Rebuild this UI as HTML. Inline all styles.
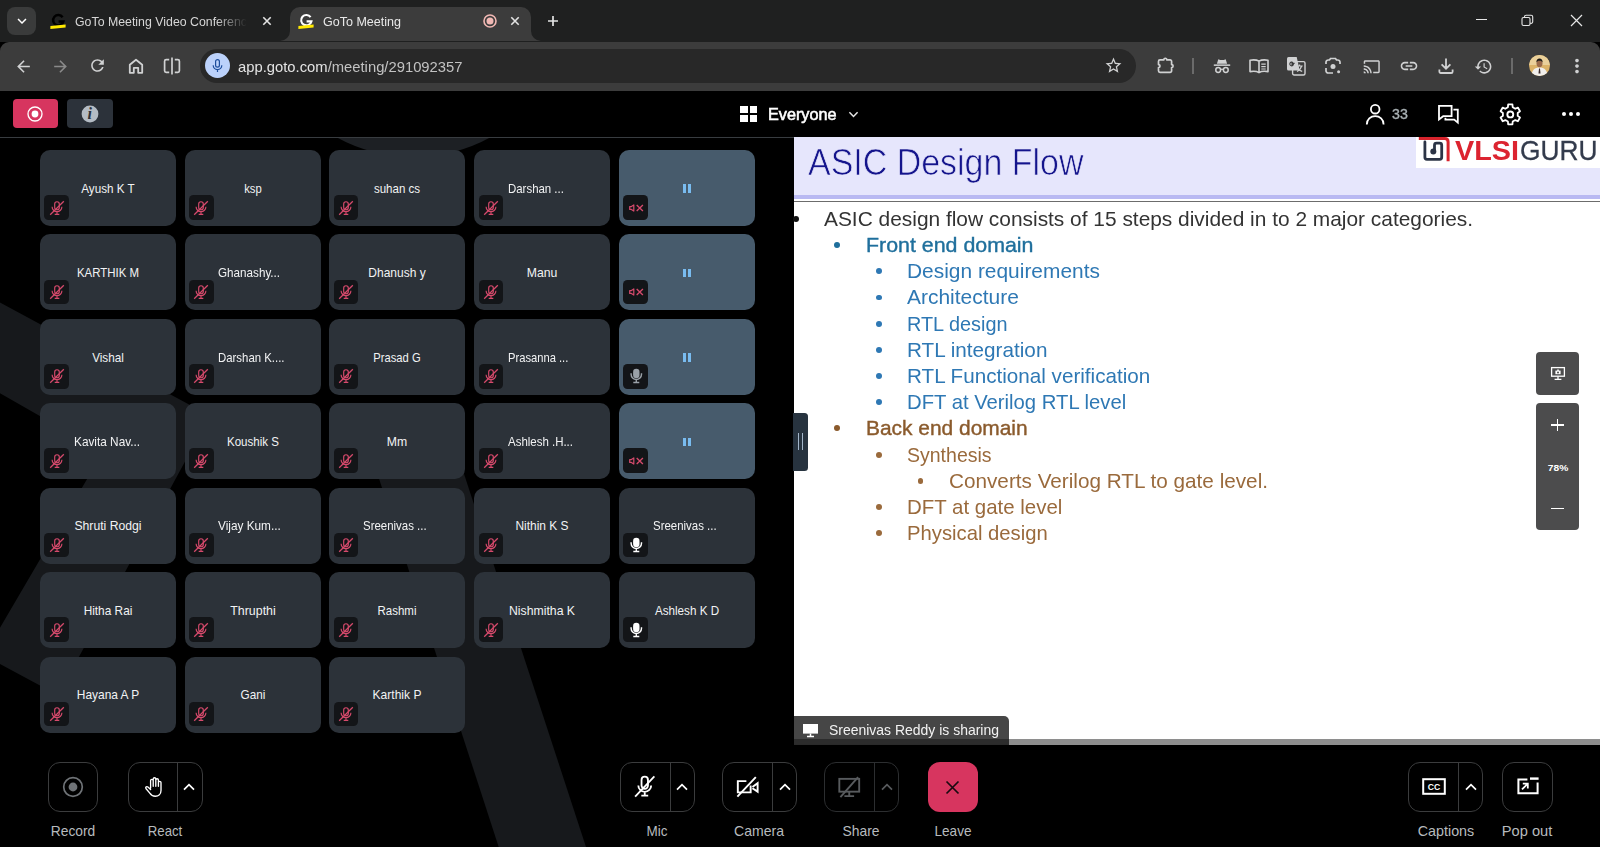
<!DOCTYPE html>
<html lang="en"><head><meta charset="utf-8"><title>GoTo Meeting</title>
<style>html,body{margin:0;padding:0;background:#000;}body{width:1600px;height:847px;position:relative;overflow:hidden;font-family:"Liberation Sans",sans-serif;}.b{position:absolute;display:block;}.t{position:absolute;white-space:nowrap;display:block;}</style></head>
<body>
<svg class="b" style="left:0;top:137px" width="794" height="710" viewBox="0 137 794 710"><path d="M336 137A160 160 0 0 0 491 137z" fill="#1d2024"/><path d="M0 302.400L209.900 415.700L58.100 695.200L0 664.100L0 627.800L102.900 452L0 393.300z" fill="#17191c"/><path d="M360 420L446.400 420L586 847L498.700 847z" fill="#17191c"/></svg>
<div class="b" style="left:0.00px;top:0.00px;width:1600.00px;height:42.00px;background:#1f2020;"></div>
<div class="b" style="left:0.00px;top:41.50px;width:1600.00px;height:49.50px;background:#3c3c3c;border-radius:9px 9px 0 0;"></div>
<div class="b" style="left:7.00px;top:7.00px;width:29.00px;height:28.00px;background:#3a3b3b;border-radius:8px;"></div>
<svg class="b" style="left:12.50px;top:12.00px;" width="18" height="18" viewBox="0 0 24 24"><path d="M16.59 8.59L12 13.17 7.41 8.59 6 10l6 6 6-6z" fill="#fff" /></svg>
<svg class="b" style="left:49px;top:12px" width="18" height="18" viewBox="0 0 18 18"><path d="M13.6 5.2A5.2 5.2 0 1 0 14.4 9.4H9.6" fill="none" stroke="#000000" stroke-width="2.5"/><path d="M1.400 14l15.200-1.400v3L1.400 17z" fill="#ffe900"/></svg>
<span id="t1" class="t" style="top:14.50px;font-size:13px;line-height:13px;color:#d6d6d6;left:75.00px;transform:scaleX(0.9495);transform-origin:0 0;padding-bottom:4px;-webkit-mask-image:linear-gradient(90deg,#000 82%,transparent 100%);mask-image:linear-gradient(90deg,#000 82%,transparent 100%);">GoTo Meeting Video Conferenc</span>
<svg class="b" style="left:260.5px;top:14.7px" width="12" height="12" viewBox="0 0 12 12"><path d="M2.300 2.300l7.400 7.400M9.700 2.300l-7.400 7.400" stroke="#e3e3e3" stroke-width="1.600" fill="none"/></svg>
<div class="b" style="left:290.00px;top:6.80px;width:241.00px;height:34.20px;background:#3c3c3c;border-radius:10px 10px 0 0;"></div>
<svg class="b" style="left:280px;top:31px" width="10" height="10" viewBox="0 0 10 10"><path d="M10 0v10H0A10 10 0 0 0 10 0z" fill="#3c3c3c"/></svg>
<svg class="b" style="left:531px;top:31px" width="10" height="10" viewBox="0 0 10 10"><path d="M0 0v10h10A10 10 0 0 1 0 0z" fill="#3c3c3c"/></svg>
<svg class="b" style="left:297px;top:12px" width="18" height="18" viewBox="0 0 18 18"><path d="M13.6 5.2A5.2 5.2 0 1 0 14.4 9.4H9.6" fill="none" stroke="#ffffff" stroke-width="2.1"/><path d="M1.400 14l15.200-1.400v3L1.400 17z" fill="#ffe900"/></svg>
<span id="t2" class="t" style="top:14.50px;font-size:13px;line-height:13px;color:#e8e8e8;left:323.00px;transform:scaleX(0.9637);transform-origin:0 0;">GoTo Meeting</span>
<svg class="b" style="left:481.50px;top:12.50px;" width="16" height="16" viewBox="0 0 16 16"><circle cx="8" cy="8" r="6" fill="none" stroke="#f1b8b4" stroke-width="1.6"/><circle cx="8" cy="8" r="3.500" fill="#f1b8b4"/></svg>
<svg class="b" style="left:508.79999999999995px;top:14.7px" width="12" height="12" viewBox="0 0 12 12"><path d="M2.300 2.300l7.400 7.400M9.700 2.300l-7.400 7.400" stroke="#e3e3e3" stroke-width="1.600" fill="none"/></svg>
<svg class="b" style="left:546.500px;top:14.700px" width="12" height="12" viewBox="0 0 12 12"><path d="M6 1v10M1 6h10" stroke="#e3e3e3" stroke-width="1.700" fill="none"/></svg>
<div class="b" style="left:1476.00px;top:18.70px;width:11.00px;height:1.20px;background:#e6e6e6;"></div>
<svg class="b" style="left:1521px;top:14px" width="13" height="13" viewBox="0 0 13 13"><rect x="1" y="3.5" width="8" height="8" rx="1.5" fill="none" stroke="#e6e6e6" stroke-width="1.1"/><path d="M3.5 3.5V2.8A1.6 1.6 0 0 1 5.1 1.2h5A1.6 1.6 0 0 1 11.7 2.8v5a1.6 1.6 0 0 1-1.6 1.6H9.2" fill="none" stroke="#e6e6e6" stroke-width="1.1"/></svg>
<svg class="b" style="left:1570px;top:14px" width="13" height="13" viewBox="0 0 13 13"><path d="M1 1l11 11M12 1L1 12" stroke="#e6e6e6" stroke-width="1.2" fill="none"/></svg>
<svg class="b" style="left:13.50px;top:56.50px;" width="19" height="19" viewBox="0 0 24 24"><path d="M20 11H7.83l5.59-5.59L12 4l-8 8 8 8 1.41-1.41L7.83 13H20v-2z" fill="#d0d1d2" /></svg>
<svg class="b" style="left:50.50px;top:56.50px;" width="19" height="19" viewBox="0 0 24 24"><path d="M12 4l-1.41 1.41L16.17 11H4v2h12.17l-5.58 5.59L12 20l8-8z" fill="#8a8a8a" /></svg>
<svg class="b" style="left:88.00px;top:56.00px;" width="19" height="19" viewBox="0 0 24 24"><path d="M17.65 6.35C16.2 4.9 14.21 4 12 4c-4.42 0-7.99 3.58-7.99 8s3.57 8 7.99 8c3.73 0 6.84-2.55 7.73-6h-2.08c-.82 2.33-3.04 4-5.65 4-3.31 0-6-2.69-6-6s2.69-6 6-6c1.66 0 3.14.69 4.22 1.78L13 11h7V4l-2.35 2.35z" fill="#d0d1d2" /></svg>
<svg class="b" style="left:125.5px;top:55.500px" width="20" height="20" viewBox="0 0 20 20"><path d="M3.800 8.700L10 3.700l6.200 5v8.100h-4v-5H7.800v5h-4z" fill="none" stroke="#d0d1d2" stroke-width="1.800" stroke-linejoin="round"/></svg>
<svg class="b" style="left:162px;top:56px" width="20" height="20" viewBox="0 0 20 20"><path d="M7.2 3.6H4.2a1.6 1.6 0 0 0-1.6 1.6v9.6a1.6 1.6 0 0 0 1.6 1.6h3M12.8 3.6h3a1.6 1.6 0 0 1 1.6 1.6v9.6a1.6 1.6 0 0 1-1.6 1.6h-3M10 1.6v16.8" fill="none" stroke="#d0d1d2" stroke-width="1.7"/></svg>
<div class="b" style="left:200.00px;top:48.50px;width:936.00px;height:34.50px;background:#282828;border-radius:17.25px;"></div>
<div class="b" style="left:205.20px;top:53.20px;width:25.00px;height:25.00px;background:#bcd2fb;border-radius:12.5px;"></div>
<svg class="b" style="left:210.200px;top:58.200px" width="15" height="15" viewBox="0 0 15 15"><rect x="5.600" y="1.700" width="3.800" height="7.400" rx="1.900" fill="none" stroke="#1b4c9c" stroke-width="1.200"/><path d="M3.200 7.300a4.300 4.300 0 0 0 8.600 0M7.500 11.600v2.300" fill="none" stroke="#1b4c9c" stroke-width="1.200"/></svg>
<span id="t3" class="t" style="top:60.08px;font-size:14.2px;line-height:14.2px;color:#e3e3e3;left:238.30px;transform:scaleX(1.0424);transform-origin:0 0;">app.goto.com<span style="color:#c2c2c2">/meeting/291092357</span></span>
<svg class="b" style="left:1103.50px;top:56.00px;" width="19" height="19" viewBox="0 0 24 24"><path d="M22 9.24l-7.19-.62L12 2 9.19 8.63 2 9.24l5.46 4.73L5.82 21 12 17.27 18.18 21l-1.63-7.03L22 9.24zM12 15.4l-3.76 2.27 1-4.28-3.32-2.88 4.38-.38L12 6.1l1.71 4.04 4.38.38-3.32 2.88 1 4.28L12 15.4z" fill="#d0d1d2" /></svg>
<svg class="b" style="left:1154.500px;top:56px" width="20" height="20" viewBox="0 0 20 20"><path d="M3.500 5.400a1.500 1.500 0 0 1 1.500-1.500H8.700a1.600 1.600 0 0 1 3.200 0H15.100a1.500 1.500 0 0 1 1.500 1.500V8.600a1.500 1.500 0 0 1 0 3V14.800a1.500 1.500 0 0 1-1.500 1.500H5a1.500 1.500 0 0 1-1.500-1.500V11.600a1.500 1.500 0 0 0 0-3z" fill="none" stroke="#d0d1d2" stroke-width="1.700" stroke-linejoin="round"/></svg>
<div class="b" style="left:1192.00px;top:58.00px;width:1.50px;height:16.00px;background:#6b6b6b;"></div>
<svg class="b" style="left:1211.5px;top:56px" width="20" height="20" viewBox="0 0 20 20"><path d="M6.3 3.2l-1.4 4.6h10.2l-1.4-4.6-1.9.7h-3.6z" fill="#d0d1d2"/><rect x="1.8" y="8.4" width="16.4" height="1.5" fill="#d0d1d2"/><circle cx="6.2" cy="14" r="2.4" fill="none" stroke="#d0d1d2" stroke-width="1.5"/><circle cx="13.8" cy="14" r="2.4" fill="none" stroke="#d0d1d2" stroke-width="1.5"/><path d="M8.6 13.6q1.4-.9 2.8 0" fill="none" stroke="#d0d1d2" stroke-width="1.3"/></svg>
<svg class="b" style="left:1247.7px;top:56px" width="22" height="20" viewBox="0 0 22 20"><path d="M11 5.2C8.8 3.8 5.4 3.6 2 4.2v11.4c3.4-.6 6.8-.4 9 1 2.2-1.400 5.6-1.600 9-1V4.200c-3.400-.600-6.800-.400-9 1zM11 5.200v11.400" fill="none" stroke="#d0d1d2" stroke-width="1.600" stroke-linejoin="round"/><path d="M13.300 8.200h4.400M13.300 10.600h4.400M13.300 13h4.400" stroke="#d0d1d2" stroke-width="1.200" fill="none"/></svg>
<svg class="b" style="left:1285px;top:55px" width="22" height="22" viewBox="0 0 22 22"><rect x="7.6" y="6.6" width="12.4" height="13.400" rx="1.500" fill="#3c3c3c" stroke="#d0d1d2" stroke-width="1.400"/><path d="M11.500 11h6.200M14.600 9.600v1.400M16.600 11c-.600 2.400-2.400 4.400-4.600 5.400M12.800 13c.800 1.500 2.400 2.800 4.400 3.400" stroke="#d0d1d2" stroke-width="1.100" fill="none"/><path d="M2 3.500a1.500 1.500 0 0 1 1.500-1.500h8.200l3 13.400H3.500A1.500 1.500 0 0 1 2 13.900z" fill="#d0d1d2"/><path d="M9.600 8.400H7v1.200h1.300c-.2.800-.8 1.300-1.600 1.300a1.900 1.900 0 1 1 1.300-3.300" fill="none" stroke="#3c3c3c" stroke-width="1.100"/></svg>
<svg class="b" style="left:1323px;top:56px" width="20" height="20" viewBox="0 0 20 20"><path d="M3 8V6.200A2.200 2.200 0 0 1 5.200 4h1.300l1-1.500h5l1 1.500h1.300A2.200 2.200 0 0 1 17 6.200V8M3 12v2.800A2.200 2.200 0 0 0 5.200 17H10" fill="none" stroke="#d0d1d2" stroke-width="1.700"/><circle cx="10" cy="10.400" r="2.500" fill="#d0d1d2"/><circle cx="15.600" cy="15.800" r="1.500" fill="#d0d1d2"/></svg>
<svg class="b" style="left:1362.75px;top:57.75px;" width="17.5" height="17.5" viewBox="0 0 24 24"><path d="M21 3H3c-1.1 0-2 .9-2 2v3h2V5h18v14h-7v2h7c1.1 0 2-.9 2-2V5c0-1.1-.9-2-2-2zM1 18v3h3c0-1.66-1.34-3-3-3zm0-4v2c2.76 0 5 2.24 5 5h2c0-3.87-3.13-7-7-7zm0-4v2c4.97 0 9 4.03 9 9h2c0-6.08-4.93-11-11-11z" fill="#d0d1d2" /></svg>
<svg class="b" style="left:1398.80px;top:56.00px;" width="20" height="20" viewBox="0 0 24 24"><path d="M3.9 12c0-1.71 1.39-3.1 3.1-3.1h4V7H7c-2.76 0-5 2.24-5 5s2.24 5 5 5h4v-1.9H7c-1.71 0-3.1-1.39-3.1-3.1zM8 13h8v-2H8v2zm9-6h-4v1.9h4c1.71 0 3.1 1.39 3.1 3.1s-1.39 3.1-3.1 3.1h-4V17h4c2.76 0 5-2.24 5-5s-2.24-5-5-5z" fill="#d0d1d2" /></svg>
<svg class="b" style="left:1435.6px;top:56px" width="20" height="20" viewBox="0 0 20 20"><path d="M10 2.5v10M5.6 8.4l4.4 4.3 4.4-4.3M3.4 13.5v2.2a1.3 1.3 0 0 0 1.3 1.3h10.6a1.3 1.3 0 0 0 1.3-1.3v-2.2" fill="none" stroke="#d0d1d2" stroke-width="1.8"/></svg>
<svg class="b" style="left:1473.70px;top:56.50px;" width="19" height="19" viewBox="0 0 24 24"><path d="M13 3c-4.97 0-9 4.03-9 9H1l3.89 3.89.07.14L9 12H6c0-3.87 3.13-7 7-7s7 3.13 7 7-3.13 7-7 7c-1.93 0-3.68-.79-4.94-2.06l-1.42 1.42C8.27 19.99 10.51 21 13 21c4.97 0 9-4.03 9-9s-4.03-9-9-9zm-1 5v5l4.28 2.54.72-1.21-3.5-2.08V8H12z" fill="#d0d1d2" /></svg>
<div class="b" style="left:1511.00px;top:58.00px;width:1.50px;height:16.00px;background:#6b6b6b;"></div>
<svg class="b" style="left:1529.2px;top:55.3px" width="21" height="21" viewBox="0 0 21 21"><defs><clipPath id="avc"><circle cx="10.500" cy="10.500" r="10.500"/></clipPath></defs><g clip-path="url(#avc)"><rect width="21" height="21" fill="#dcb368"/><rect x="0" y="0" width="21" height="10" fill="#ead09a"/><path d="M2.500 21c0-6 3.500-8.500 8-8.500s8 2.500 8 8.500z" fill="#f1efec"/><ellipse cx="10.500" cy="8.600" rx="3" ry="3.700" fill="#9a6a4a"/><path d="M7.300 7.600c0-3 1.400-4.200 3.200-4.200s3.200 1.200 3.200 4.200c-.800-1.400-1.800-1.800-3.200-1.800s-2.400.4-3.200 1.800z" fill="#1d1a18"/><path d="M10 13.500h1l.5 5h-2z" fill="#3a2a2a"/></g></svg>
<svg class="b" style="left:1566.00px;top:54.60px;" width="22" height="22" viewBox="0 0 24 24"><path d="M12 8c1.1 0 2-.9 2-2s-.9-2-2-2-2 .9-2 2 .9 2 2 2zm0 2c-1.1 0-2 .9-2 2s.9 2 2 2 2-.9 2-2-.9-2-2-2zm0 6c-1.1 0-2 .9-2 2s.9 2 2 2 2-.9 2-2-.9-2-2-2z" fill="#d0d1d2" /></svg>
<div class="b" style="left:0.00px;top:91.00px;width:1600.00px;height:46.00px;background:#000;"></div>
<div class="b" style="left:0.00px;top:136.60px;width:794.00px;height:1.20px;background:#383c40;"></div>
<div class="b" style="left:12.50px;top:99.00px;width:45.50px;height:29.00px;background:#d7355f;border-radius:4px;"></div>
<svg class="b" style="left:26.20px;top:104.50px;" width="18" height="18" viewBox="0 0 18 18"><circle cx="9" cy="9" r="7" fill="none" stroke="#fff" stroke-width="1.350"/><circle cx="9" cy="9" r="3.400" fill="#fff"/></svg>
<div class="b" style="left:67.00px;top:99.00px;width:45.50px;height:29.00px;background:#2c323a;border-radius:4px;"></div>
<svg class="b" style="left:80.50px;top:104.50px;" width="18" height="18" viewBox="0 0 18 18"><circle cx="9" cy="9" r="8.400" fill="#b4bcc4"/></svg>
<span id="t4" class="t" style="top:106.06px;font-size:16px;line-height:16px;color:#2c323a;font-weight:700;left:89.70px;transform:translateX(-50%);font-family:'Liberation Serif',serif;font-style:italic;">i</span>
<div class="b" style="left:740.00px;top:106.00px;width:7.80px;height:7.00px;background:#fff;"></div>
<div class="b" style="left:749.60px;top:106.00px;width:7.80px;height:7.00px;background:#fff;"></div>
<div class="b" style="left:740.00px;top:115.00px;width:7.80px;height:7.00px;background:#fff;"></div>
<div class="b" style="left:749.60px;top:115.00px;width:7.80px;height:7.00px;background:#fff;"></div>
<span id="t5" class="t" style="top:107.11px;font-size:15.7px;line-height:15.7px;color:#fff;left:768.00px;transform:scaleX(1.0335);transform-origin:0 0;-webkit-text-stroke:0.55px #fff;">Everyone</span>
<svg class="b" style="left:847px;top:109px" width="13" height="11" viewBox="0 0 13 11"><path d="M2.400 3.200l4.100 4.200 4.100-4.200" fill="none" stroke="#e6e6e6" stroke-width="1.500"/></svg>
<svg class="b" style="left:1364px;top:102px" width="23" height="24" viewBox="0 0 23 24"><circle cx="11.200" cy="7.200" r="4.300" fill="none" stroke="#fff" stroke-width="1.800"/><path d="M2.800 22.400c0-5 3.800-8.200 8.400-8.200s8.400 3.200 8.400 8.200" fill="none" stroke="#fff" stroke-width="1.800"/></svg>
<span id="t6" class="t" style="top:107.17px;font-size:14.8px;line-height:14.8px;color:#a9b1b4;left:1392.30px;transform:scaleX(0.9594);transform-origin:0 0;-webkit-text-stroke:0.4px #a9b1b4;">33</span>
<svg class="b" style="left:1436px;top:103px" width="25" height="22" viewBox="0 0 25 22"><path d="M3 2.800h12.600v10.400H7.200L3 16.400z" fill="none" stroke="#fff" stroke-width="1.800" stroke-linejoin="miter"/><path d="M17.400 6.600h4.400v13l-3.600-3H9.400v-1.800" fill="none" stroke="#fff" stroke-width="1.800"/></svg>
<svg class="b" style="left:0;top:0;overflow:visible" width="1" height="1"><path d="M1507.89 107.25L1508.18 104.42L1512.42 104.42L1512.71 107.25L1515.29 108.74L1517.88 107.57L1520.00 111.25L1517.70 112.91L1517.70 115.89L1520.00 117.55L1517.88 121.23L1515.29 120.06L1512.71 121.55L1512.42 124.38L1508.18 124.38L1507.89 121.55L1505.31 120.06L1502.72 121.23L1500.60 117.55L1502.90 115.89L1502.90 112.91L1500.60 111.25L1502.72 107.57L1505.31 108.74Z" fill="none" stroke="#fff" stroke-width="1.800" stroke-linejoin="round"/><circle cx="1510.3" cy="114.4" r="2.96" fill="none" stroke="#fff" stroke-width="1.900"/></svg>
<div class="b" style="left:1561.50px;top:112.30px;width:4.20px;height:4.20px;background:#fff;border-radius:2.1px;"></div>
<div class="b" style="left:1568.90px;top:112.30px;width:4.20px;height:4.20px;background:#fff;border-radius:2.1px;"></div>
<div class="b" style="left:1576.30px;top:112.30px;width:4.20px;height:4.20px;background:#fff;border-radius:2.1px;"></div>
<div class="b" style="left:40.00px;top:150.00px;width:136.00px;height:76.00px;background:#2c3239;border-radius:10px;"></div>
<span id="t7" class="t" style="top:181.76px;font-size:13.4px;line-height:13.4px;color:#f2f3f4;left:108.00px;transform:translateX(-50%) scaleX(0.8712);">Ayush K T</span>
<div class="b" style="left:44.40px;top:195.20px;width:24.60px;height:24.60px;background:#131518;border-radius:4.5px;"></div><svg class="b" style="left:46.70px;top:197.50px" width="20" height="20" viewBox="0 0 20 20"><path d="M7.700 9.400V6a2.300 2.300 0 0 1 4.600 0v3.400a2.300 2.300 0 0 1-4.600 0z" fill="none" stroke="#d64a6c" stroke-width="1.150"/><path d="M5.100 8.800a4.900 4.900 0 0 0 9.800 0M10 13.900v2.300M7.700 16.300h4.600" fill="none" stroke="#d64a6c" stroke-width="1.150"/><path d="M3.200 16.800L16.800 3.200" stroke="#d64a6c" stroke-width="1.250"/></svg>
<div class="b" style="left:184.72px;top:150.00px;width:136.00px;height:76.00px;background:#2c3239;border-radius:10px;"></div>
<span id="t8" class="t" style="top:181.76px;font-size:13.4px;line-height:13.4px;color:#f2f3f4;left:252.72px;transform:translateX(-50%) scaleX(0.8396);">ksp</span>
<div class="b" style="left:189.12px;top:195.20px;width:24.60px;height:24.60px;background:#131518;border-radius:4.5px;"></div><svg class="b" style="left:191.42px;top:197.50px" width="20" height="20" viewBox="0 0 20 20"><path d="M7.700 9.400V6a2.300 2.300 0 0 1 4.600 0v3.400a2.300 2.300 0 0 1-4.600 0z" fill="none" stroke="#d64a6c" stroke-width="1.150"/><path d="M5.100 8.800a4.900 4.900 0 0 0 9.800 0M10 13.900v2.300M7.700 16.300h4.600" fill="none" stroke="#d64a6c" stroke-width="1.150"/><path d="M3.200 16.800L16.800 3.200" stroke="#d64a6c" stroke-width="1.250"/></svg>
<div class="b" style="left:329.44px;top:150.00px;width:136.00px;height:76.00px;background:#2c3239;border-radius:10px;"></div>
<span id="t9" class="t" style="top:181.76px;font-size:13.4px;line-height:13.4px;color:#f2f3f4;left:397.44px;transform:translateX(-50%) scaleX(0.8618);">suhan cs</span>
<div class="b" style="left:333.84px;top:195.20px;width:24.60px;height:24.60px;background:#131518;border-radius:4.5px;"></div><svg class="b" style="left:336.14px;top:197.50px" width="20" height="20" viewBox="0 0 20 20"><path d="M7.700 9.400V6a2.300 2.300 0 0 1 4.600 0v3.400a2.300 2.300 0 0 1-4.600 0z" fill="none" stroke="#d64a6c" stroke-width="1.150"/><path d="M5.100 8.800a4.900 4.900 0 0 0 9.800 0M10 13.900v2.300M7.700 16.300h4.600" fill="none" stroke="#d64a6c" stroke-width="1.150"/><path d="M3.200 16.800L16.800 3.200" stroke="#d64a6c" stroke-width="1.250"/></svg>
<div class="b" style="left:474.16px;top:150.00px;width:136.00px;height:76.00px;background:#2c3239;border-radius:10px;"></div>
<span id="t10" class="t" style="top:181.76px;font-size:13.4px;line-height:13.4px;color:#f2f3f4;left:507.86px;transform:scaleX(0.8534);transform-origin:0 0;">Darshan ...</span>
<div class="b" style="left:478.56px;top:195.20px;width:24.60px;height:24.60px;background:#131518;border-radius:4.5px;"></div><svg class="b" style="left:480.86px;top:197.50px" width="20" height="20" viewBox="0 0 20 20"><path d="M7.700 9.400V6a2.300 2.300 0 0 1 4.600 0v3.400a2.300 2.300 0 0 1-4.600 0z" fill="none" stroke="#d64a6c" stroke-width="1.150"/><path d="M5.100 8.800a4.900 4.900 0 0 0 9.800 0M10 13.900v2.300M7.700 16.300h4.600" fill="none" stroke="#d64a6c" stroke-width="1.150"/><path d="M3.200 16.800L16.800 3.200" stroke="#d64a6c" stroke-width="1.250"/></svg>
<div class="b" style="left:618.88px;top:150.00px;width:136.00px;height:76.00px;background:#475b6c;border-radius:10px;"></div>
<div class="b" style="left:682.98px;top:184.30px;width:3.30px;height:8.70px;background:#79bcf0;"></div>
<div class="b" style="left:687.98px;top:184.30px;width:3.30px;height:8.70px;background:#79bcf0;"></div>
<div class="b" style="left:623.28px;top:195.20px;width:24.60px;height:24.60px;background:#131518;border-radius:4.5px;"></div><svg class="b" style="left:625.58px;top:197.50px" width="20" height="20" viewBox="0 0 20 20"><path d="M3.700 8.600h1.700l2.400-1.700v6.200l-2.400-1.700H3.700z" fill="none" stroke="#d64a6c" stroke-width="1.200" stroke-linejoin="round"/><path d="M10.700 7l6.200 6M16.900 7l-6.200 6" stroke="#d64a6c" stroke-width="1.350"/></svg>
<div class="b" style="left:40.00px;top:234.42px;width:136.00px;height:76.00px;background:#2c3239;border-radius:10px;"></div>
<span id="t11" class="t" style="top:266.18px;font-size:13.4px;line-height:13.4px;color:#f2f3f4;left:108.00px;transform:translateX(-50%) scaleX(0.8545);">KARTHIK M</span>
<div class="b" style="left:44.40px;top:279.62px;width:24.60px;height:24.60px;background:#131518;border-radius:4.5px;"></div><svg class="b" style="left:46.70px;top:281.92px" width="20" height="20" viewBox="0 0 20 20"><path d="M7.700 9.400V6a2.300 2.300 0 0 1 4.600 0v3.400a2.300 2.300 0 0 1-4.600 0z" fill="none" stroke="#d64a6c" stroke-width="1.150"/><path d="M5.100 8.800a4.900 4.900 0 0 0 9.800 0M10 13.900v2.300M7.700 16.300h4.600" fill="none" stroke="#d64a6c" stroke-width="1.150"/><path d="M3.200 16.800L16.800 3.200" stroke="#d64a6c" stroke-width="1.250"/></svg>
<div class="b" style="left:184.72px;top:234.42px;width:136.00px;height:76.00px;background:#2c3239;border-radius:10px;"></div>
<span id="t12" class="t" style="top:266.18px;font-size:13.4px;line-height:13.4px;color:#f2f3f4;left:218.42px;transform:scaleX(0.8720);transform-origin:0 0;">Ghanashy...</span>
<div class="b" style="left:189.12px;top:279.62px;width:24.60px;height:24.60px;background:#131518;border-radius:4.5px;"></div><svg class="b" style="left:191.42px;top:281.92px" width="20" height="20" viewBox="0 0 20 20"><path d="M7.700 9.400V6a2.300 2.300 0 0 1 4.600 0v3.400a2.300 2.300 0 0 1-4.600 0z" fill="none" stroke="#d64a6c" stroke-width="1.150"/><path d="M5.100 8.800a4.900 4.900 0 0 0 9.800 0M10 13.900v2.300M7.700 16.300h4.600" fill="none" stroke="#d64a6c" stroke-width="1.150"/><path d="M3.200 16.800L16.800 3.200" stroke="#d64a6c" stroke-width="1.250"/></svg>
<div class="b" style="left:329.44px;top:234.42px;width:136.00px;height:76.00px;background:#2c3239;border-radius:10px;"></div>
<span id="t13" class="t" style="top:266.18px;font-size:13.4px;line-height:13.4px;color:#f2f3f4;left:397.44px;transform:translateX(-50%) scaleX(0.8964);">Dhanush y</span>
<div class="b" style="left:333.84px;top:279.62px;width:24.60px;height:24.60px;background:#131518;border-radius:4.5px;"></div><svg class="b" style="left:336.14px;top:281.92px" width="20" height="20" viewBox="0 0 20 20"><path d="M7.700 9.400V6a2.300 2.300 0 0 1 4.600 0v3.400a2.300 2.300 0 0 1-4.600 0z" fill="none" stroke="#d64a6c" stroke-width="1.150"/><path d="M5.100 8.800a4.900 4.900 0 0 0 9.800 0M10 13.900v2.300M7.700 16.300h4.600" fill="none" stroke="#d64a6c" stroke-width="1.150"/><path d="M3.200 16.800L16.800 3.200" stroke="#d64a6c" stroke-width="1.250"/></svg>
<div class="b" style="left:474.16px;top:234.42px;width:136.00px;height:76.00px;background:#2c3239;border-radius:10px;"></div>
<span id="t14" class="t" style="top:266.18px;font-size:13.4px;line-height:13.4px;color:#f2f3f4;left:542.16px;transform:translateX(-50%) scaleX(0.9134);">Manu</span>
<div class="b" style="left:478.56px;top:279.62px;width:24.60px;height:24.60px;background:#131518;border-radius:4.5px;"></div><svg class="b" style="left:480.86px;top:281.92px" width="20" height="20" viewBox="0 0 20 20"><path d="M7.700 9.400V6a2.300 2.300 0 0 1 4.600 0v3.400a2.300 2.300 0 0 1-4.600 0z" fill="none" stroke="#d64a6c" stroke-width="1.150"/><path d="M5.100 8.800a4.900 4.900 0 0 0 9.800 0M10 13.900v2.300M7.700 16.300h4.600" fill="none" stroke="#d64a6c" stroke-width="1.150"/><path d="M3.200 16.800L16.800 3.200" stroke="#d64a6c" stroke-width="1.250"/></svg>
<div class="b" style="left:618.88px;top:234.42px;width:136.00px;height:76.00px;background:#475b6c;border-radius:10px;"></div>
<div class="b" style="left:682.98px;top:268.72px;width:3.30px;height:8.70px;background:#79bcf0;"></div>
<div class="b" style="left:687.98px;top:268.72px;width:3.30px;height:8.70px;background:#79bcf0;"></div>
<div class="b" style="left:623.28px;top:279.62px;width:24.60px;height:24.60px;background:#131518;border-radius:4.5px;"></div><svg class="b" style="left:625.58px;top:281.92px" width="20" height="20" viewBox="0 0 20 20"><path d="M3.700 8.600h1.700l2.400-1.700v6.200l-2.400-1.700H3.700z" fill="none" stroke="#d64a6c" stroke-width="1.200" stroke-linejoin="round"/><path d="M10.700 7l6.200 6M16.900 7l-6.200 6" stroke="#d64a6c" stroke-width="1.350"/></svg>
<div class="b" style="left:40.00px;top:318.84px;width:136.00px;height:76.00px;background:#2c3239;border-radius:10px;"></div>
<span id="t15" class="t" style="top:350.60px;font-size:13.4px;line-height:13.4px;color:#f2f3f4;left:108.00px;transform:translateX(-50%) scaleX(0.8749);">Vishal</span>
<div class="b" style="left:44.40px;top:364.04px;width:24.60px;height:24.60px;background:#131518;border-radius:4.5px;"></div><svg class="b" style="left:46.70px;top:366.34px" width="20" height="20" viewBox="0 0 20 20"><path d="M7.700 9.400V6a2.300 2.300 0 0 1 4.600 0v3.400a2.300 2.300 0 0 1-4.600 0z" fill="none" stroke="#d64a6c" stroke-width="1.150"/><path d="M5.100 8.800a4.900 4.900 0 0 0 9.800 0M10 13.900v2.300M7.700 16.300h4.600" fill="none" stroke="#d64a6c" stroke-width="1.150"/><path d="M3.200 16.800L16.800 3.200" stroke="#d64a6c" stroke-width="1.250"/></svg>
<div class="b" style="left:184.72px;top:318.84px;width:136.00px;height:76.00px;background:#2c3239;border-radius:10px;"></div>
<span id="t16" class="t" style="top:350.60px;font-size:13.4px;line-height:13.4px;color:#f2f3f4;left:218.42px;transform:scaleX(0.8509);transform-origin:0 0;">Darshan K....</span>
<div class="b" style="left:189.12px;top:364.04px;width:24.60px;height:24.60px;background:#131518;border-radius:4.5px;"></div><svg class="b" style="left:191.42px;top:366.34px" width="20" height="20" viewBox="0 0 20 20"><path d="M7.700 9.400V6a2.300 2.300 0 0 1 4.600 0v3.400a2.300 2.300 0 0 1-4.600 0z" fill="none" stroke="#d64a6c" stroke-width="1.150"/><path d="M5.100 8.800a4.900 4.900 0 0 0 9.800 0M10 13.900v2.300M7.700 16.300h4.600" fill="none" stroke="#d64a6c" stroke-width="1.150"/><path d="M3.200 16.800L16.800 3.200" stroke="#d64a6c" stroke-width="1.250"/></svg>
<div class="b" style="left:329.44px;top:318.84px;width:136.00px;height:76.00px;background:#2c3239;border-radius:10px;"></div>
<span id="t17" class="t" style="top:350.60px;font-size:13.4px;line-height:13.4px;color:#f2f3f4;left:397.44px;transform:translateX(-50%) scaleX(0.8360);">Prasad G</span>
<div class="b" style="left:333.84px;top:364.04px;width:24.60px;height:24.60px;background:#131518;border-radius:4.5px;"></div><svg class="b" style="left:336.14px;top:366.34px" width="20" height="20" viewBox="0 0 20 20"><path d="M7.700 9.400V6a2.300 2.300 0 0 1 4.600 0v3.400a2.300 2.300 0 0 1-4.600 0z" fill="none" stroke="#d64a6c" stroke-width="1.150"/><path d="M5.100 8.800a4.900 4.900 0 0 0 9.800 0M10 13.900v2.300M7.700 16.300h4.600" fill="none" stroke="#d64a6c" stroke-width="1.150"/><path d="M3.200 16.800L16.800 3.200" stroke="#d64a6c" stroke-width="1.250"/></svg>
<div class="b" style="left:474.16px;top:318.84px;width:136.00px;height:76.00px;background:#2c3239;border-radius:10px;"></div>
<span id="t18" class="t" style="top:350.60px;font-size:13.4px;line-height:13.4px;color:#f2f3f4;left:507.86px;transform:scaleX(0.8350);transform-origin:0 0;">Prasanna ...</span>
<div class="b" style="left:478.56px;top:364.04px;width:24.60px;height:24.60px;background:#131518;border-radius:4.5px;"></div><svg class="b" style="left:480.86px;top:366.34px" width="20" height="20" viewBox="0 0 20 20"><path d="M7.700 9.400V6a2.300 2.300 0 0 1 4.600 0v3.400a2.300 2.300 0 0 1-4.600 0z" fill="none" stroke="#d64a6c" stroke-width="1.150"/><path d="M5.100 8.800a4.900 4.900 0 0 0 9.800 0M10 13.900v2.300M7.700 16.300h4.600" fill="none" stroke="#d64a6c" stroke-width="1.150"/><path d="M3.200 16.800L16.800 3.200" stroke="#d64a6c" stroke-width="1.250"/></svg>
<div class="b" style="left:618.88px;top:318.84px;width:136.00px;height:76.00px;background:#475b6c;border-radius:10px;"></div>
<div class="b" style="left:682.98px;top:353.14px;width:3.30px;height:8.70px;background:#79bcf0;"></div>
<div class="b" style="left:687.98px;top:353.14px;width:3.30px;height:8.70px;background:#79bcf0;"></div>
<div class="b" style="left:623.28px;top:364.04px;width:24.60px;height:24.60px;background:#131518;border-radius:4.5px;"></div><svg class="b" style="left:625.58px;top:366.34px" width="20" height="20" viewBox="0 0 20 20"><rect x="7.100" y="2.700" width="6.400" height="9.500" rx="3.200" fill="#9aa1a8"/><path d="M5.100 7.200V8.300a5.200 5.200 0 0 0 10.400 0V7.200M10.300 13.500V16.200M7.300 16.400h6" fill="none" stroke="#9aa1a8" stroke-width="1.450"/></svg>
<div class="b" style="left:40.00px;top:403.26px;width:136.00px;height:76.00px;background:#2c3239;border-radius:10px;"></div>
<span id="t19" class="t" style="top:435.02px;font-size:13.4px;line-height:13.4px;color:#f2f3f4;left:73.70px;transform:scaleX(0.8823);transform-origin:0 0;">Kavita Nav...</span>
<div class="b" style="left:44.40px;top:448.46px;width:24.60px;height:24.60px;background:#131518;border-radius:4.5px;"></div><svg class="b" style="left:46.70px;top:450.76px" width="20" height="20" viewBox="0 0 20 20"><path d="M7.700 9.400V6a2.300 2.300 0 0 1 4.600 0v3.400a2.300 2.300 0 0 1-4.600 0z" fill="none" stroke="#d64a6c" stroke-width="1.150"/><path d="M5.100 8.800a4.900 4.900 0 0 0 9.800 0M10 13.900v2.300M7.700 16.300h4.600" fill="none" stroke="#d64a6c" stroke-width="1.150"/><path d="M3.200 16.800L16.800 3.200" stroke="#d64a6c" stroke-width="1.250"/></svg>
<div class="b" style="left:184.72px;top:403.26px;width:136.00px;height:76.00px;background:#2c3239;border-radius:10px;"></div>
<span id="t20" class="t" style="top:435.02px;font-size:13.4px;line-height:13.4px;color:#f2f3f4;left:252.72px;transform:translateX(-50%) scaleX(0.8624);">Koushik S</span>
<div class="b" style="left:189.12px;top:448.46px;width:24.60px;height:24.60px;background:#131518;border-radius:4.5px;"></div><svg class="b" style="left:191.42px;top:450.76px" width="20" height="20" viewBox="0 0 20 20"><path d="M7.700 9.400V6a2.300 2.300 0 0 1 4.600 0v3.400a2.300 2.300 0 0 1-4.600 0z" fill="none" stroke="#d64a6c" stroke-width="1.150"/><path d="M5.100 8.800a4.900 4.900 0 0 0 9.800 0M10 13.900v2.300M7.700 16.300h4.600" fill="none" stroke="#d64a6c" stroke-width="1.150"/><path d="M3.200 16.800L16.800 3.200" stroke="#d64a6c" stroke-width="1.250"/></svg>
<div class="b" style="left:329.44px;top:403.26px;width:136.00px;height:76.00px;background:#2c3239;border-radius:10px;"></div>
<span id="t21" class="t" style="top:435.02px;font-size:13.4px;line-height:13.4px;color:#f2f3f4;left:397.44px;transform:translateX(-50%) scaleX(0.9143);">Mm</span>
<div class="b" style="left:333.84px;top:448.46px;width:24.60px;height:24.60px;background:#131518;border-radius:4.5px;"></div><svg class="b" style="left:336.14px;top:450.76px" width="20" height="20" viewBox="0 0 20 20"><path d="M7.700 9.400V6a2.300 2.300 0 0 1 4.600 0v3.400a2.300 2.300 0 0 1-4.600 0z" fill="none" stroke="#d64a6c" stroke-width="1.150"/><path d="M5.100 8.800a4.900 4.900 0 0 0 9.800 0M10 13.900v2.300M7.700 16.300h4.600" fill="none" stroke="#d64a6c" stroke-width="1.150"/><path d="M3.200 16.800L16.800 3.200" stroke="#d64a6c" stroke-width="1.250"/></svg>
<div class="b" style="left:474.16px;top:403.26px;width:136.00px;height:76.00px;background:#2c3239;border-radius:10px;"></div>
<span id="t22" class="t" style="top:435.02px;font-size:13.4px;line-height:13.4px;color:#f2f3f4;left:507.86px;transform:scaleX(0.8561);transform-origin:0 0;">Ashlesh .H...</span>
<div class="b" style="left:478.56px;top:448.46px;width:24.60px;height:24.60px;background:#131518;border-radius:4.5px;"></div><svg class="b" style="left:480.86px;top:450.76px" width="20" height="20" viewBox="0 0 20 20"><path d="M7.700 9.400V6a2.300 2.300 0 0 1 4.600 0v3.400a2.300 2.300 0 0 1-4.600 0z" fill="none" stroke="#d64a6c" stroke-width="1.150"/><path d="M5.100 8.800a4.900 4.900 0 0 0 9.800 0M10 13.900v2.300M7.700 16.300h4.600" fill="none" stroke="#d64a6c" stroke-width="1.150"/><path d="M3.200 16.800L16.800 3.200" stroke="#d64a6c" stroke-width="1.250"/></svg>
<div class="b" style="left:618.88px;top:403.26px;width:136.00px;height:76.00px;background:#475b6c;border-radius:10px;"></div>
<div class="b" style="left:682.98px;top:437.56px;width:3.30px;height:8.70px;background:#79bcf0;"></div>
<div class="b" style="left:687.98px;top:437.56px;width:3.30px;height:8.70px;background:#79bcf0;"></div>
<div class="b" style="left:623.28px;top:448.46px;width:24.60px;height:24.60px;background:#131518;border-radius:4.5px;"></div><svg class="b" style="left:625.58px;top:450.76px" width="20" height="20" viewBox="0 0 20 20"><path d="M3.700 8.600h1.700l2.400-1.700v6.200l-2.400-1.700H3.700z" fill="none" stroke="#d64a6c" stroke-width="1.200" stroke-linejoin="round"/><path d="M10.700 7l6.200 6M16.900 7l-6.200 6" stroke="#d64a6c" stroke-width="1.350"/></svg>
<div class="b" style="left:40.00px;top:487.68px;width:136.00px;height:76.00px;background:#2c3239;border-radius:10px;"></div>
<span id="t23" class="t" style="top:519.44px;font-size:13.4px;line-height:13.4px;color:#f2f3f4;left:108.00px;transform:translateX(-50%) scaleX(0.9118);">Shruti Rodgi</span>
<div class="b" style="left:44.40px;top:532.88px;width:24.60px;height:24.60px;background:#131518;border-radius:4.5px;"></div><svg class="b" style="left:46.70px;top:535.18px" width="20" height="20" viewBox="0 0 20 20"><path d="M7.700 9.400V6a2.300 2.300 0 0 1 4.600 0v3.400a2.300 2.300 0 0 1-4.600 0z" fill="none" stroke="#d64a6c" stroke-width="1.150"/><path d="M5.100 8.800a4.900 4.900 0 0 0 9.800 0M10 13.900v2.300M7.700 16.300h4.600" fill="none" stroke="#d64a6c" stroke-width="1.150"/><path d="M3.200 16.800L16.800 3.200" stroke="#d64a6c" stroke-width="1.250"/></svg>
<div class="b" style="left:184.72px;top:487.68px;width:136.00px;height:76.00px;background:#2c3239;border-radius:10px;"></div>
<span id="t24" class="t" style="top:519.44px;font-size:13.4px;line-height:13.4px;color:#f2f3f4;left:218.42px;transform:scaleX(0.8820);transform-origin:0 0;">Vijay Kum...</span>
<div class="b" style="left:189.12px;top:532.88px;width:24.60px;height:24.60px;background:#131518;border-radius:4.5px;"></div><svg class="b" style="left:191.42px;top:535.18px" width="20" height="20" viewBox="0 0 20 20"><path d="M7.700 9.400V6a2.300 2.300 0 0 1 4.600 0v3.400a2.300 2.300 0 0 1-4.600 0z" fill="none" stroke="#d64a6c" stroke-width="1.150"/><path d="M5.100 8.800a4.900 4.900 0 0 0 9.800 0M10 13.900v2.300M7.700 16.300h4.600" fill="none" stroke="#d64a6c" stroke-width="1.150"/><path d="M3.200 16.800L16.800 3.200" stroke="#d64a6c" stroke-width="1.250"/></svg>
<div class="b" style="left:329.44px;top:487.68px;width:136.00px;height:76.00px;background:#2c3239;border-radius:10px;"></div>
<span id="t25" class="t" style="top:519.44px;font-size:13.4px;line-height:13.4px;color:#f2f3f4;left:363.14px;transform:scaleX(0.8544);transform-origin:0 0;">Sreenivas ...</span>
<div class="b" style="left:333.84px;top:532.88px;width:24.60px;height:24.60px;background:#131518;border-radius:4.5px;"></div><svg class="b" style="left:336.14px;top:535.18px" width="20" height="20" viewBox="0 0 20 20"><path d="M7.700 9.400V6a2.300 2.300 0 0 1 4.600 0v3.400a2.300 2.300 0 0 1-4.600 0z" fill="none" stroke="#d64a6c" stroke-width="1.150"/><path d="M5.100 8.800a4.900 4.900 0 0 0 9.800 0M10 13.900v2.300M7.700 16.300h4.600" fill="none" stroke="#d64a6c" stroke-width="1.150"/><path d="M3.200 16.800L16.800 3.200" stroke="#d64a6c" stroke-width="1.250"/></svg>
<div class="b" style="left:474.16px;top:487.68px;width:136.00px;height:76.00px;background:#2c3239;border-radius:10px;"></div>
<span id="t26" class="t" style="top:519.44px;font-size:13.4px;line-height:13.4px;color:#f2f3f4;left:542.16px;transform:translateX(-50%) scaleX(0.8917);">Nithin K S</span>
<div class="b" style="left:478.56px;top:532.88px;width:24.60px;height:24.60px;background:#131518;border-radius:4.5px;"></div><svg class="b" style="left:480.86px;top:535.18px" width="20" height="20" viewBox="0 0 20 20"><path d="M7.700 9.400V6a2.300 2.300 0 0 1 4.600 0v3.400a2.300 2.300 0 0 1-4.600 0z" fill="none" stroke="#d64a6c" stroke-width="1.150"/><path d="M5.100 8.800a4.900 4.900 0 0 0 9.800 0M10 13.900v2.300M7.700 16.300h4.600" fill="none" stroke="#d64a6c" stroke-width="1.150"/><path d="M3.200 16.800L16.800 3.200" stroke="#d64a6c" stroke-width="1.250"/></svg>
<div class="b" style="left:618.88px;top:487.68px;width:136.00px;height:76.00px;background:#2c3239;border-radius:10px;"></div>
<span id="t27" class="t" style="top:519.44px;font-size:13.4px;line-height:13.4px;color:#f2f3f4;left:652.58px;transform:scaleX(0.8544);transform-origin:0 0;">Sreenivas ...</span>
<div class="b" style="left:623.28px;top:532.88px;width:24.60px;height:24.60px;background:#131518;border-radius:4.5px;"></div><svg class="b" style="left:625.58px;top:535.18px" width="20" height="20" viewBox="0 0 20 20"><rect x="7.100" y="2.700" width="6.400" height="9.500" rx="3.200" fill="#ffffff"/><path d="M5.100 7.200V8.300a5.200 5.200 0 0 0 10.400 0V7.200M10.300 13.500V16.200M7.300 16.400h6" fill="none" stroke="#ffffff" stroke-width="1.450"/></svg>
<div class="b" style="left:40.00px;top:572.10px;width:136.00px;height:76.00px;background:#2c3239;border-radius:10px;"></div>
<span id="t28" class="t" style="top:603.86px;font-size:13.4px;line-height:13.4px;color:#f2f3f4;left:108.00px;transform:translateX(-50%) scaleX(0.8842);">Hitha Rai</span>
<div class="b" style="left:44.40px;top:617.30px;width:24.60px;height:24.60px;background:#131518;border-radius:4.5px;"></div><svg class="b" style="left:46.70px;top:619.60px" width="20" height="20" viewBox="0 0 20 20"><path d="M7.700 9.400V6a2.300 2.300 0 0 1 4.600 0v3.400a2.300 2.300 0 0 1-4.600 0z" fill="none" stroke="#d64a6c" stroke-width="1.150"/><path d="M5.100 8.800a4.900 4.900 0 0 0 9.800 0M10 13.900v2.300M7.700 16.300h4.600" fill="none" stroke="#d64a6c" stroke-width="1.150"/><path d="M3.200 16.800L16.800 3.200" stroke="#d64a6c" stroke-width="1.250"/></svg>
<div class="b" style="left:184.72px;top:572.10px;width:136.00px;height:76.00px;background:#2c3239;border-radius:10px;"></div>
<span id="t29" class="t" style="top:603.86px;font-size:13.4px;line-height:13.4px;color:#f2f3f4;left:252.72px;transform:translateX(-50%) scaleX(0.9242);">Thrupthi</span>
<div class="b" style="left:189.12px;top:617.30px;width:24.60px;height:24.60px;background:#131518;border-radius:4.5px;"></div><svg class="b" style="left:191.42px;top:619.60px" width="20" height="20" viewBox="0 0 20 20"><path d="M7.700 9.400V6a2.300 2.300 0 0 1 4.600 0v3.400a2.300 2.300 0 0 1-4.600 0z" fill="none" stroke="#d64a6c" stroke-width="1.150"/><path d="M5.100 8.800a4.900 4.900 0 0 0 9.800 0M10 13.900v2.300M7.700 16.300h4.600" fill="none" stroke="#d64a6c" stroke-width="1.150"/><path d="M3.200 16.800L16.800 3.200" stroke="#d64a6c" stroke-width="1.250"/></svg>
<div class="b" style="left:329.44px;top:572.10px;width:136.00px;height:76.00px;background:#2c3239;border-radius:10px;"></div>
<span id="t30" class="t" style="top:603.86px;font-size:13.4px;line-height:13.4px;color:#f2f3f4;left:397.44px;transform:translateX(-50%) scaleX(0.8570);">Rashmi</span>
<div class="b" style="left:333.84px;top:617.30px;width:24.60px;height:24.60px;background:#131518;border-radius:4.5px;"></div><svg class="b" style="left:336.14px;top:619.60px" width="20" height="20" viewBox="0 0 20 20"><path d="M7.700 9.400V6a2.300 2.300 0 0 1 4.600 0v3.400a2.300 2.300 0 0 1-4.600 0z" fill="none" stroke="#d64a6c" stroke-width="1.150"/><path d="M5.100 8.800a4.900 4.900 0 0 0 9.800 0M10 13.900v2.300M7.700 16.300h4.600" fill="none" stroke="#d64a6c" stroke-width="1.150"/><path d="M3.200 16.800L16.800 3.200" stroke="#d64a6c" stroke-width="1.250"/></svg>
<div class="b" style="left:474.16px;top:572.10px;width:136.00px;height:76.00px;background:#2c3239;border-radius:10px;"></div>
<span id="t31" class="t" style="top:603.86px;font-size:13.4px;line-height:13.4px;color:#f2f3f4;left:542.16px;transform:translateX(-50%) scaleX(0.9157);">Nishmitha K</span>
<div class="b" style="left:478.56px;top:617.30px;width:24.60px;height:24.60px;background:#131518;border-radius:4.5px;"></div><svg class="b" style="left:480.86px;top:619.60px" width="20" height="20" viewBox="0 0 20 20"><path d="M7.700 9.400V6a2.300 2.300 0 0 1 4.600 0v3.400a2.300 2.300 0 0 1-4.600 0z" fill="none" stroke="#d64a6c" stroke-width="1.150"/><path d="M5.100 8.800a4.900 4.900 0 0 0 9.800 0M10 13.900v2.300M7.700 16.300h4.600" fill="none" stroke="#d64a6c" stroke-width="1.150"/><path d="M3.200 16.800L16.800 3.200" stroke="#d64a6c" stroke-width="1.250"/></svg>
<div class="b" style="left:618.88px;top:572.10px;width:136.00px;height:76.00px;background:#2c3239;border-radius:10px;"></div>
<span id="t32" class="t" style="top:603.86px;font-size:13.4px;line-height:13.4px;color:#f2f3f4;left:686.88px;transform:translateX(-50%) scaleX(0.8712);">Ashlesh K D</span>
<div class="b" style="left:623.28px;top:617.30px;width:24.60px;height:24.60px;background:#131518;border-radius:4.5px;"></div><svg class="b" style="left:625.58px;top:619.60px" width="20" height="20" viewBox="0 0 20 20"><rect x="7.100" y="2.700" width="6.400" height="9.500" rx="3.200" fill="#ffffff"/><path d="M5.100 7.200V8.300a5.200 5.200 0 0 0 10.400 0V7.200M10.300 13.500V16.200M7.300 16.400h6" fill="none" stroke="#ffffff" stroke-width="1.450"/></svg>
<div class="b" style="left:40.00px;top:656.52px;width:136.00px;height:76.00px;background:#2c3239;border-radius:10px;"></div>
<span id="t33" class="t" style="top:688.28px;font-size:13.4px;line-height:13.4px;color:#f2f3f4;left:108.00px;transform:translateX(-50%) scaleX(0.8916);">Hayana A P</span>
<div class="b" style="left:44.40px;top:701.72px;width:24.60px;height:24.60px;background:#131518;border-radius:4.5px;"></div><svg class="b" style="left:46.70px;top:704.02px" width="20" height="20" viewBox="0 0 20 20"><path d="M7.700 9.400V6a2.300 2.300 0 0 1 4.600 0v3.400a2.300 2.300 0 0 1-4.600 0z" fill="none" stroke="#d64a6c" stroke-width="1.150"/><path d="M5.100 8.800a4.900 4.900 0 0 0 9.800 0M10 13.900v2.300M7.700 16.300h4.600" fill="none" stroke="#d64a6c" stroke-width="1.150"/><path d="M3.200 16.800L16.800 3.200" stroke="#d64a6c" stroke-width="1.250"/></svg>
<div class="b" style="left:184.72px;top:656.52px;width:136.00px;height:76.00px;background:#2c3239;border-radius:10px;"></div>
<span id="t34" class="t" style="top:688.28px;font-size:13.4px;line-height:13.4px;color:#f2f3f4;left:252.72px;transform:translateX(-50%) scaleX(0.8764);">Gani</span>
<div class="b" style="left:189.12px;top:701.72px;width:24.60px;height:24.60px;background:#131518;border-radius:4.5px;"></div><svg class="b" style="left:191.42px;top:704.02px" width="20" height="20" viewBox="0 0 20 20"><path d="M7.700 9.400V6a2.300 2.300 0 0 1 4.600 0v3.400a2.300 2.300 0 0 1-4.600 0z" fill="none" stroke="#d64a6c" stroke-width="1.150"/><path d="M5.100 8.800a4.900 4.900 0 0 0 9.800 0M10 13.900v2.300M7.700 16.300h4.600" fill="none" stroke="#d64a6c" stroke-width="1.150"/><path d="M3.200 16.800L16.800 3.200" stroke="#d64a6c" stroke-width="1.250"/></svg>
<div class="b" style="left:329.44px;top:656.52px;width:136.00px;height:76.00px;background:#2c3239;border-radius:10px;"></div>
<span id="t35" class="t" style="top:688.28px;font-size:13.4px;line-height:13.4px;color:#f2f3f4;left:397.44px;transform:translateX(-50%) scaleX(0.8982);">Karthik P</span>
<div class="b" style="left:333.84px;top:701.72px;width:24.60px;height:24.60px;background:#131518;border-radius:4.5px;"></div><svg class="b" style="left:336.14px;top:704.02px" width="20" height="20" viewBox="0 0 20 20"><path d="M7.700 9.400V6a2.300 2.300 0 0 1 4.600 0v3.400a2.300 2.300 0 0 1-4.600 0z" fill="none" stroke="#d64a6c" stroke-width="1.150"/><path d="M5.100 8.800a4.900 4.900 0 0 0 9.800 0M10 13.900v2.300M7.700 16.300h4.600" fill="none" stroke="#d64a6c" stroke-width="1.150"/><path d="M3.200 16.800L16.800 3.200" stroke="#d64a6c" stroke-width="1.250"/></svg>
<div class="b" style="left:794.00px;top:137.00px;width:806.00px;height:602.00px;background:#fff;"></div>
<div class="b" style="left:794.00px;top:137.00px;width:806.00px;height:58.00px;background:#e6e6fc;"></div>
<div class="b" style="left:794.00px;top:194.80px;width:806.00px;height:4.40px;background:#b9b9f2;"></div>
<div class="b" style="left:794.00px;top:200.70px;width:806.00px;height:1.20px;background:#6c6c6c;"></div>
<span id="t36" class="t" style="top:144.53px;font-size:36px;line-height:36px;color:#14148c;left:807.50px;transform:scaleX(0.9431);transform-origin:0 0;-webkit-text-stroke:0.7px #e6e6fc;">ASIC Design Flow</span>
<div class="b" style="left:1415.50px;top:137.00px;width:184.50px;height:31.00px;background:#fff;"></div>
<svg class="b" style="left:1416px;top:137px" width="36" height="28" viewBox="1416 137 36 28"><path d="M1424.900 142v15.300q0 2 2 2h12.800q2 0 2-2v-12.100q0-2-2-2h-3.200q-2 0-2 2v5" fill="none" stroke="#2c3446" stroke-width="2.800" stroke-linecap="round"/><circle cx="1433.300" cy="151.400" r="3" fill="#2c3446"/><path d="M1418.800 138.600h26q3.300 0 3.300 3.300v19.400" fill="none" stroke="#d8232c" stroke-width="3"/></svg>
<span id="t37" class="t" style="top:136.99px;font-size:27.3px;line-height:27.3px;color:#dc2430;font-weight:700;left:1455.20px;transform:scaleX(1.0549);transform-origin:0 0;">VLSI</span>
<span id="t38" class="t" style="top:136.99px;font-size:27.3px;line-height:27.3px;color:#333b4c;left:1520.20px;transform:scaleX(0.9642);transform-origin:0 0;-webkit-text-stroke:0.3px #333b4c;">GURU</span>
<span id="t39" class="t" style="top:208.89px;font-size:20.8px;line-height:20.8px;color:#333333;left:824.20px;transform:scaleX(1.0044);transform-origin:0 0;">ASIC design flow consists of 15 steps divided in to 2 major categories.</span>
<div class="b" style="left:792.95px;top:215.95px;width:5.90px;height:5.90px;background:#111;border-radius:2.95px;"></div>
<span id="t40" class="t" style="top:235.08px;font-size:20.8px;line-height:20.8px;color:#1f6f9c;left:866.00px;transform:scaleX(1.0275);transform-origin:0 0;-webkit-text-stroke:0.4px #1f6f9c;">Front end domain</span>
<div class="b" style="left:834.45px;top:242.14px;width:5.90px;height:5.90px;background:#1f6f9c;border-radius:2.95px;"></div>
<span id="t41" class="t" style="top:261.27px;font-size:20.8px;line-height:20.8px;color:#2e78b4;left:907.30px;transform:scaleX(1.0053);transform-origin:0 0;">Design requirements</span>
<div class="b" style="left:876.25px;top:268.33px;width:5.90px;height:5.90px;background:#2e78b4;border-radius:2.95px;"></div>
<span id="t42" class="t" style="top:287.46px;font-size:20.8px;line-height:20.8px;color:#2e78b4;left:907.30px;transform:scaleX(1.0075);transform-origin:0 0;">Architecture</span>
<div class="b" style="left:876.25px;top:294.52px;width:5.90px;height:5.90px;background:#2e78b4;border-radius:2.95px;"></div>
<span id="t43" class="t" style="top:313.65px;font-size:20.8px;line-height:20.8px;color:#2e78b4;left:907.30px;transform:scaleX(0.9553);transform-origin:0 0;">RTL design</span>
<div class="b" style="left:876.25px;top:320.71px;width:5.90px;height:5.90px;background:#2e78b4;border-radius:2.95px;"></div>
<span id="t44" class="t" style="top:339.84px;font-size:20.8px;line-height:20.8px;color:#2e78b4;left:907.30px;transform:scaleX(0.9954);transform-origin:0 0;">RTL integration</span>
<div class="b" style="left:876.25px;top:346.90px;width:5.90px;height:5.90px;background:#2e78b4;border-radius:2.95px;"></div>
<span id="t45" class="t" style="top:366.03px;font-size:20.8px;line-height:20.8px;color:#2e78b4;left:907.30px;transform:scaleX(0.9928);transform-origin:0 0;">RTL Functional verification</span>
<div class="b" style="left:876.25px;top:373.09px;width:5.90px;height:5.90px;background:#2e78b4;border-radius:2.95px;"></div>
<span id="t46" class="t" style="top:392.22px;font-size:20.8px;line-height:20.8px;color:#2e78b4;left:907.30px;transform:scaleX(0.9742);transform-origin:0 0;">DFT at Verilog RTL level</span>
<div class="b" style="left:876.25px;top:399.28px;width:5.90px;height:5.90px;background:#2e78b4;border-radius:2.95px;"></div>
<span id="t47" class="t" style="top:418.41px;font-size:20.8px;line-height:20.8px;color:#8a5a2c;left:866.00px;transform:scaleX(1.0056);transform-origin:0 0;-webkit-text-stroke:0.4px #8a5a2c;">Back end domain</span>
<div class="b" style="left:834.45px;top:425.47px;width:5.90px;height:5.90px;background:#8a5a2c;border-radius:2.95px;"></div>
<span id="t48" class="t" style="top:444.60px;font-size:20.8px;line-height:20.8px;color:#9a6a3c;left:907.30px;transform:scaleX(0.9382);transform-origin:0 0;">Synthesis</span>
<div class="b" style="left:876.25px;top:451.66px;width:5.90px;height:5.90px;background:#9a6a3c;border-radius:2.95px;"></div>
<span id="t49" class="t" style="top:470.79px;font-size:20.8px;line-height:20.8px;color:#9a6a3c;left:948.50px;transform:scaleX(0.9962);transform-origin:0 0;">Converts Verilog RTL to gate level.</span>
<div class="b" style="left:917.55px;top:477.85px;width:5.90px;height:5.90px;background:#9a6a3c;border-radius:2.95px;"></div>
<span id="t50" class="t" style="top:496.98px;font-size:20.8px;line-height:20.8px;color:#9a6a3c;left:907.30px;transform:scaleX(0.9836);transform-origin:0 0;">DFT at gate level</span>
<div class="b" style="left:876.25px;top:504.04px;width:5.90px;height:5.90px;background:#9a6a3c;border-radius:2.95px;"></div>
<span id="t51" class="t" style="top:523.17px;font-size:20.8px;line-height:20.8px;color:#9a6a3c;left:907.30px;transform:scaleX(0.9736);transform-origin:0 0;">Physical design</span>
<div class="b" style="left:876.25px;top:530.23px;width:5.90px;height:5.90px;background:#9a6a3c;border-radius:2.95px;"></div>
<div class="b" style="left:793.00px;top:412.50px;width:15.20px;height:58.00px;background:#27333f;border-radius:0 3.5px 3.5px 0;"></div>
<div class="b" style="left:798.00px;top:433.00px;width:1.30px;height:16.50px;background:#a3b6ca;"></div>
<div class="b" style="left:802.10px;top:433.00px;width:1.30px;height:16.50px;background:#a3b6ca;"></div>
<div class="b" style="left:1536.10px;top:351.70px;width:42.90px;height:43.00px;background:#4c4c4d;border-radius:4px;"></div>
<svg class="b" style="left:1550px;top:366px" width="16" height="15" viewBox="0 0 16 15"><rect x="1.600" y="1.600" width="12.800" height="8.600" fill="none" stroke="#fff" stroke-width="1.300"/><path d="M8 10.400v2.800M4.600 13.400h6.800" stroke="#fff" stroke-width="1.300"/><rect x="5.400" y="4.600" width="5.200" height="3.600" fill="#fff"/><rect x="7" y="3.600" width="2" height="1.200" fill="#fff"/><circle cx="8" cy="6.400" r="1" fill="#4d4d4d"/></svg>
<div class="b" style="left:1536.10px;top:403.40px;width:42.90px;height:126.30px;background:#4c4c4d;border-radius:4px;"></div>
<div class="b" style="left:1551.40px;top:424.40px;width:12.40px;height:1.40px;background:#fff;"></div>
<div class="b" style="left:1556.90px;top:418.90px;width:1.40px;height:12.40px;background:#fff;"></div>
<span id="t52" class="t" style="top:463.26px;font-size:9.5px;line-height:9.5px;color:#fff;font-weight:700;left:1557.70px;transform:translateX(-50%) scaleX(1.0781);">78%</span>
<div class="b" style="left:1551.40px;top:507.60px;width:12.40px;height:1.40px;background:#fff;"></div>
<div class="b" style="left:794.00px;top:739.00px;width:806.00px;height:5.50px;background:#8e8e8e;"></div>
<div class="b" style="left:794.00px;top:739.00px;width:215.00px;height:5.50px;background:#3a3a3a;"></div>
<div class="b" style="left:794.00px;top:715.70px;width:215.00px;height:28.50px;background:rgba(62,62,62,0.96);border-radius:0 5px 0 0;"></div>
<div class="b" style="left:794.00px;top:739.00px;width:215.00px;height:5.50px;background:rgba(30,30,30,0.55);"></div>
<svg class="b" style="left:802px;top:723px" width="17" height="15" viewBox="0 0 17 15"><rect x="1" y="1" width="15" height="9.600" fill="#fff"/><path d="M8.500 10.500v2.600M5 13.400h7" stroke="#fff" stroke-width="1.500"/></svg>
<span id="t53" class="t" style="top:723.43px;font-size:14.5px;line-height:14.5px;color:#f2f2f2;left:829.00px;transform:scaleX(0.9631);transform-origin:0 0;">Sreenivas Reddy is sharing</span>
<div class="b" style="left:48.00px;top:762.00px;width:50.00px;height:50.00px;border-radius:12px;border:1px solid #3b3c3d;box-sizing:border-box;"></div>
<svg class="b" style="left:61.10px;top:774.60px;" width="24" height="24" viewBox="0 0 24 24"><circle cx="12" cy="12" r="9.300" fill="none" stroke="#6f7377" stroke-width="1.700"/><circle cx="12" cy="12" r="4.400" fill="#6f7377"/></svg>
<span id="t54" class="t" style="top:824.14px;font-size:14.6px;line-height:14.6px;color:#b7bbbe;left:72.80px;transform:translateX(-50%) scaleX(0.9459);">Record</span>
<div class="b" style="left:127.50px;top:762.00px;width:75.60px;height:50.00px;border-radius:12px;border:1px solid #3b3c3d;box-sizing:border-box;"></div><div class="b" style="left:177.40px;top:762.50px;width:1.00px;height:49.00px;background:#3b3c3d;"></div>
<svg class="b" style="left:141.60px;top:774.50px" width="24" height="24" viewBox="0 0 24 24"><path d="M8.600 13V5.600a1.300 1.300 0 0 1 2.600 0V4a1.300 1.300 0 0 1 2.600 0V5a1.300 1.300 0 0 1 2.600 0V7.600a1.300 1.300 0 0 1 2.600 0V15.500c0 3.500-2.500 5.700-5.700 5.700-2.600 0-4.200-1-5.500-3.100L3.900 13.500c-.7-1.300.9-2.500 2-1.500L8.600 14.600M11.200 5.600V11.200M13.800 4V11.200M16.400 5V11.200" fill="none" stroke="#fff" stroke-width="1.350" stroke-linejoin="round" stroke-linecap="round"/></svg>
<svg class="b" style="left:182.40px;top:780.500px" width="14" height="12" viewBox="0 0 14 12"><path d="M2 8.600l5-5 5 5" fill="none" stroke="#fff" stroke-width="1.700"/></svg>
<span id="t55" class="t" style="top:824.14px;font-size:14.6px;line-height:14.6px;color:#b7bbbe;left:164.70px;transform:translateX(-50%) scaleX(0.9049);">React</span>
<div class="b" style="left:619.60px;top:762.00px;width:75.20px;height:50.00px;border-radius:12px;border:1px solid #3b3c3d;box-sizing:border-box;"></div><div class="b" style="left:669.50px;top:762.50px;width:1.00px;height:49.00px;background:#3b3c3d;"></div>
<svg class="b" style="left:631.300px;top:773px" width="27.500" height="27.500" viewBox="0 0 24 24"><path d="M9.200 11V6a2.800 2.800 0 0 1 5.600 0v5a2.800 2.800 0 0 1-5.600 0z" fill="none" stroke="#fff" stroke-width="1.600"/><path d="M6.400 10.800a5.600 5.600 0 0 0 11.200 0M12 16.600v3M9 19.800h6" fill="none" stroke="#fff" stroke-width="1.600"/><path d="M3.600 20.600L20.400 3" stroke="#fff" stroke-width="1.600"/></svg>
<svg class="b" style="left:675.40px;top:780.500px" width="14" height="12" viewBox="0 0 14 12"><path d="M2 8.600l5-5 5 5" fill="none" stroke="#fff" stroke-width="1.700"/></svg>
<span id="t56" class="t" style="top:824.14px;font-size:14.6px;line-height:14.6px;color:#b7bbbe;left:657.30px;transform:translateX(-50%) scaleX(0.9250);">Mic</span>
<div class="b" style="left:722.00px;top:762.00px;width:74.80px;height:50.00px;border-radius:12px;border:1px solid #3b3c3d;box-sizing:border-box;"></div><div class="b" style="left:771.90px;top:762.50px;width:1.00px;height:49.00px;background:#3b3c3d;"></div>
<svg class="b" style="left:733.800px;top:773.200px" width="27" height="27" viewBox="0 0 24 24"><path d="M11 7.200H3.400v10h11.400v-6" fill="none" stroke="#fff" stroke-width="1.700"/><path d="M16.400 12.400l4.600-3.400v7.600l-4.600-3" fill="none" stroke="#fff" stroke-width="1.700"/><path d="M3 21L19.400 3.600" stroke="#fff" stroke-width="1.700"/></svg>
<svg class="b" style="left:777.60px;top:780.500px" width="14" height="12" viewBox="0 0 14 12"><path d="M2 8.600l5-5 5 5" fill="none" stroke="#fff" stroke-width="1.700"/></svg>
<span id="t57" class="t" style="top:824.14px;font-size:14.6px;line-height:14.6px;color:#b7bbbe;left:759.40px;transform:translateX(-50%) scaleX(0.9633);">Camera</span>
<div class="b" style="left:824.40px;top:762.00px;width:74.70px;height:50.00px;border-radius:12px;border:1px solid #2c2e30;box-sizing:border-box;"></div><div class="b" style="left:874.30px;top:762.50px;width:1.00px;height:49.00px;background:#2c2e30;"></div>
<svg class="b" style="left:835.800px;top:773.600px" width="26.500" height="26.500" viewBox="0 0 24 24"><rect x="3" y="4.400" width="18" height="11.600" fill="none" stroke="#585b5e" stroke-width="1.700"/><path d="M12 16v3.400M7.600 20h8.800" stroke="#585b5e" stroke-width="1.700"/><path d="M4 21L20 2.800" stroke="#585b5e" stroke-width="1.700"/></svg>
<svg class="b" style="left:880.00px;top:780.500px" width="14" height="12" viewBox="0 0 14 12"><path d="M2 8.600l5-5 5 5" fill="none" stroke="#585b5e" stroke-width="1.700"/></svg>
<span id="t58" class="t" style="top:824.14px;font-size:14.6px;line-height:14.6px;color:#b7bbbe;left:861.00px;transform:translateX(-50%) scaleX(0.9499);">Share</span>
<div class="b" style="left:927.70px;top:762.00px;width:50.40px;height:50.00px;background:#d7355f;border-radius:12px;"></div>
<svg class="b" style="left:945.400px;top:779.500px" width="15" height="15" viewBox="0 0 15 15"><path d="M1.500 1.500l12 12M13.500 1.500l-12 12" stroke="#1a0a10" stroke-width="1.700"/></svg>
<span id="t59" class="t" style="top:824.14px;font-size:14.6px;line-height:14.6px;color:#b7bbbe;left:953.00px;transform:translateX(-50%) scaleX(0.9305);">Leave</span>
<div class="b" style="left:1408.40px;top:762.00px;width:74.40px;height:50.00px;border-radius:12px;border:1px solid #3b3c3d;box-sizing:border-box;"></div><div class="b" style="left:1457.90px;top:762.50px;width:1.00px;height:49.00px;background:#3b3c3d;"></div>
<svg class="b" style="left:1422px;top:778px" width="24" height="18" viewBox="0 0 24 18"><rect x="1.200" y="1.200" width="21.600" height="14.600" fill="none" stroke="#fff" stroke-width="2"/></svg>
<span id="t60" class="t" style="top:783.10px;font-size:8.5px;line-height:8.5px;color:#fff;font-weight:700;left:1434.00px;transform:translateX(-50%) scaleX(1.0178);">CC</span>
<svg class="b" style="left:1464.00px;top:780.500px" width="14" height="12" viewBox="0 0 14 12"><path d="M2 8.600l5-5 5 5" fill="none" stroke="#fff" stroke-width="1.700"/></svg>
<span id="t61" class="t" style="top:824.14px;font-size:14.6px;line-height:14.6px;color:#b7bbbe;left:1446.00px;transform:translateX(-50%) scaleX(0.9807);">Captions</span>
<div class="b" style="left:1502.10px;top:762.00px;width:50.50px;height:50.00px;border-radius:12px;border:1px solid #3b3c3d;box-sizing:border-box;"></div>
<svg class="b" style="left:1516px;top:776px" width="24" height="20" viewBox="0 0 24 20"><path d="M11.400 3.600H2.400v13.600h19.200V6.600" fill="none" stroke="#fff" stroke-width="2"/><path d="M14 2.600h8.600" stroke="#fff" stroke-width="2.400"/><path d="M6 13.400l5.200-5.200M6.800 7.600h5v5" fill="none" stroke="#fff" stroke-width="1.800"/></svg>
<span id="t62" class="t" style="top:824.14px;font-size:14.6px;line-height:14.6px;color:#b7bbbe;left:1527.20px;transform:translateX(-50%) scaleX(1.0037);">Pop out</span>
</body></html>
